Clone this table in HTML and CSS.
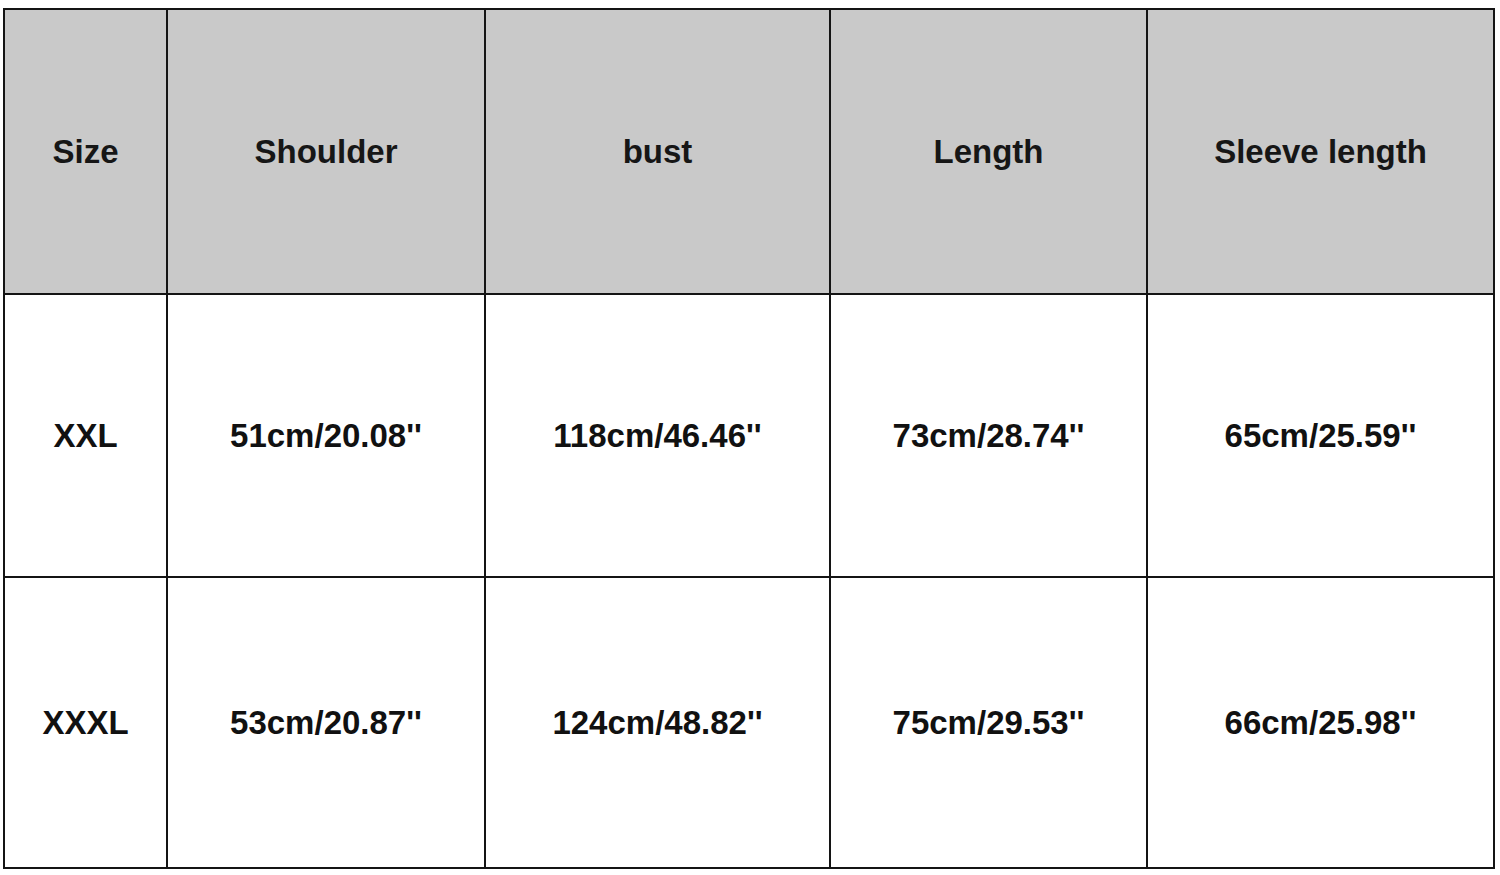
FILE: index.html
```html
<!DOCTYPE html>
<html lang="en">
<head>
<meta charset="utf-8">
<title>Size chart</title>
<link rel="stylesheet" href="styles.css">
</head>
<body>
<div class="chart" role="table">
  <div class="cell head">Size</div>
  <div class="cell head">Shoulder</div>
  <div class="cell head">bust</div>
  <div class="cell head">Length</div>
  <div class="cell head">Sleeve length</div>

  <div class="cell">XXL</div>
  <div class="cell">51cm/20.08''</div>
  <div class="cell">118cm/46.46''</div>
  <div class="cell">73cm/28.74''</div>
  <div class="cell">65cm/25.59''</div>

  <div class="cell">XXXL</div>
  <div class="cell">53cm/20.87''</div>
  <div class="cell">124cm/48.82''</div>
  <div class="cell">75cm/29.53''</div>
  <div class="cell">66cm/25.98''</div>
</div>
</body>
</html>
```

FILE: styles.css
```css
html, body {
  margin: 0;
  padding: 0;
  background: #ffffff;
}

body {
  padding: 8px 0 0 3px;
  font-family: "Liberation Sans", Arial, sans-serif;
}

.chart {
  display: grid;
  grid-template-columns: 161px 316px 343px 315px 345px;
  grid-template-rows: 283px 281px 289px;
  gap: 2px;
  padding: 2px;
  width: max-content;
  background: #141414;
}

.cell {
  display: flex;
  align-items: center;
  justify-content: center;
  background: #ffffff;
  color: #111111;
  font-size: 33px;
  font-weight: 700;
  white-space: nowrap;
}

.cell.head {
  background: #c9c9c9;
  color: #161616;
}
```
